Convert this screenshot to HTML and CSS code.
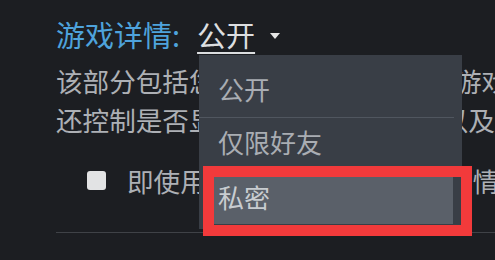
FILE: index.html
```html
<!DOCTYPE html>
<html lang="zh-CN">
<head>
<meta charset="utf-8">
<title>游戏详情</title>
<link rel="stylesheet" href="styles.css">
</head>
<body>
<div class="page">
  <section class="privacy">
    <div class="title">
      <span class="label">游戏详情:</span>
      <span class="value">公开</span><span class="caret"></span>
    </div>
    <p class="desc"><span class="line">该部分包括您所拥有和愿望单中的游戏</span><span class="line">还控制是否显示您的游戏库内容, 以及</span></p>
    <label class="check-row">
      <span class="checkbox"></span>
      <span class="check-text">即使用户可以看到我的游戏详情</span>
    </label>
    <div class="divider"></div>

    <div class="dropdown">
      <div class="item">公开</div>
      <div class="sep"></div>
      <div class="item">仅限好友</div>
      <div class="item item-active">私密</div>
    </div>
    <div class="annotation"></div>
  </section>
</div>
</body>
</html>
```

FILE: styles.css
```css
html, body {
  margin: 0;
  padding: 0;
  background: #1c1e22;
  width: 495px;
  height: 260px;
  overflow: hidden;
}

.page {
  font-family: "Noto Sans CJK SC", "Noto Sans", sans-serif;
  color: #adb0b5;
  width: 495px;
  overflow: hidden;
}

.privacy {
  position: relative;
  padding: 16px 0 0 56px;
  height: 244px;
  box-sizing: border-box;
}

.title {
  font-size: 29px;
  line-height: 36px;
  white-space: nowrap;
  display: flex;
  align-items: center;
}

.label {
  color: #4ea3dc;
}

.value {
  color: #dcdee0;
  margin-left: 17px;
  text-decoration: underline;
  text-decoration-thickness: 1.5px;
  text-underline-offset: 5px;
}

.caret {
  display: inline-block;
  width: 0;
  height: 0;
  border-left: 5px solid transparent;
  border-right: 5px solid transparent;
  border-top: 6px solid #e6e6e6;
  margin-left: 15px;
  margin-top: 4px;
}

.desc {
  margin: 9px 0 0;
  font-size: 26.6px;
  line-height: 39px;
  white-space: nowrap;
  overflow: hidden;
}

.line {
  display: block;
}

.check-row {
  display: flex;
  align-items: center;
  margin: 22px 0 0 31px;
  height: 39px;
  white-space: nowrap;
  overflow: hidden;
}

.checkbox {
  flex: none;
  width: 19px;
  height: 19px;
  border-radius: 3px;
  background: #e2e3e4;
}

.check-text {
  margin-left: 21px;
  font-size: 26.6px;
  line-height: 39px;
}

.divider {
  margin-top: 32px;
  height: 1px;
  background: #3f4247;
}

.dropdown {
  position: absolute;
  left: 199px;
  top: 55px;
  width: 263px;
  height: 174px;
  background: #393e46;
  padding-top: 10px;
  box-sizing: border-box;
  font-size: 26px;
  color: #a9adb3;
}

.item {
  height: 53px;
  line-height: 48px;
  padding-left: 19px;
  white-space: nowrap;
}

.sep {
  height: 1px;
  margin: -1px 8px 0 0;
  background: #50565f;
}

.item-active {
  margin: 0 9px 0 5px;
  padding-left: 14px;
  line-height: 52px;
  background: #5a6069;
  color: #c8ccd0;
}

.annotation {
  position: absolute;
  left: 203px;
  top: 166px;
  width: 269px;
  height: 70px;
  box-sizing: border-box;
  border: 11px solid #f23a3b;
}
```
